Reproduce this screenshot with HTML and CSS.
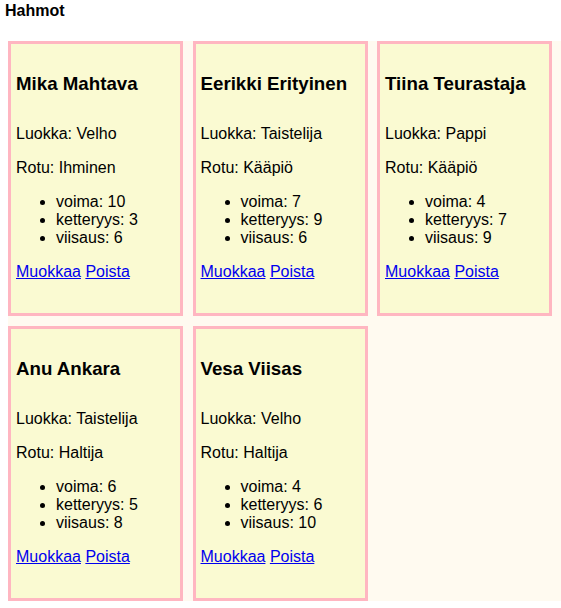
FILE: index.html
```html
<!DOCTYPE html>
<html lang="fi">
<head>
<meta charset="utf-8">
<title>Hahmot</title>
<link rel="stylesheet" href="styles.css">
</head>
<body>
<div class="title">Hahmot</div>
<div class="board">
  <div class="card">
    <h3>Mika Mahtava</h3>
    <p>Luokka: Velho</p>
    <p>Rotu: Ihminen</p>
    <ul><li>voima: 10</li><li>ketteryys: 3</li><li>viisaus: 6</li></ul>
    <p><a href="#">Muokkaa</a> <a href="#">Poista</a></p>
  </div>
  <div class="card">
    <h3>Eerikki Erityinen</h3>
    <p>Luokka: Taistelija</p>
    <p>Rotu: Kääpiö</p>
    <ul><li>voima: 7</li><li>ketteryys: 9</li><li>viisaus: 6</li></ul>
    <p><a href="#">Muokkaa</a> <a href="#">Poista</a></p>
  </div>
  <div class="card">
    <h3>Tiina Teurastaja</h3>
    <p>Luokka: Pappi</p>
    <p>Rotu: Kääpiö</p>
    <ul><li>voima: 4</li><li>ketteryys: 7</li><li>viisaus: 9</li></ul>
    <p><a href="#">Muokkaa</a> <a href="#">Poista</a></p>
  </div>
  <div class="card">
    <h3>Anu Ankara</h3>
    <p>Luokka: Taistelija</p>
    <p>Rotu: Haltija</p>
    <ul><li>voima: 6</li><li>ketteryys: 5</li><li>viisaus: 8</li></ul>
    <p><a href="#">Muokkaa</a> <a href="#">Poista</a></p>
  </div>
  <div class="card">
    <h3>Vesa Viisas</h3>
    <p>Luokka: Velho</p>
    <p>Rotu: Haltija</p>
    <ul><li>voima: 4</li><li>ketteryys: 6</li><li>viisaus: 10</li></ul>
    <p><a href="#">Muokkaa</a> <a href="#">Poista</a></p>
  </div>
</div>
</body>
</html>
```
FILE: styles.css
```css
html, body {
  margin: 0;
  padding: 0;
  background: #ffffff;
  font-family: "Liberation Sans", Arial, sans-serif;
  font-size: 16px;
  color: #000;
}

.title {
  margin: 2px 0 0 5px;
  font-weight: bold;
  font-size: 16px;
  line-height: 18px;
}

.board {
  margin: 21px 0 0 8px;
  background: #fffaf0;
  display: grid;
  grid-template-columns: repeat(3, 175px);
  grid-auto-rows: 275px;
  column-gap: 9.5px;
  row-gap: 10px;
}

.card {
  box-sizing: border-box;
  background: #fafad2;
  border: 3px solid #ffb6c1;
  padding: 10px 5px;
  overflow: hidden;
}

.card h3 {
  font-size: 18.72px;
  margin: 18.72px 0 30px;
  line-height: normal;
}

.card p {
  margin: 16px 0;
  line-height: normal;
}

.card ul {
  margin: 16px 0;
  padding-left: 40px;
  line-height: normal;
}

.card a {
  color: #0000ee;
  text-decoration: underline;
}
```
